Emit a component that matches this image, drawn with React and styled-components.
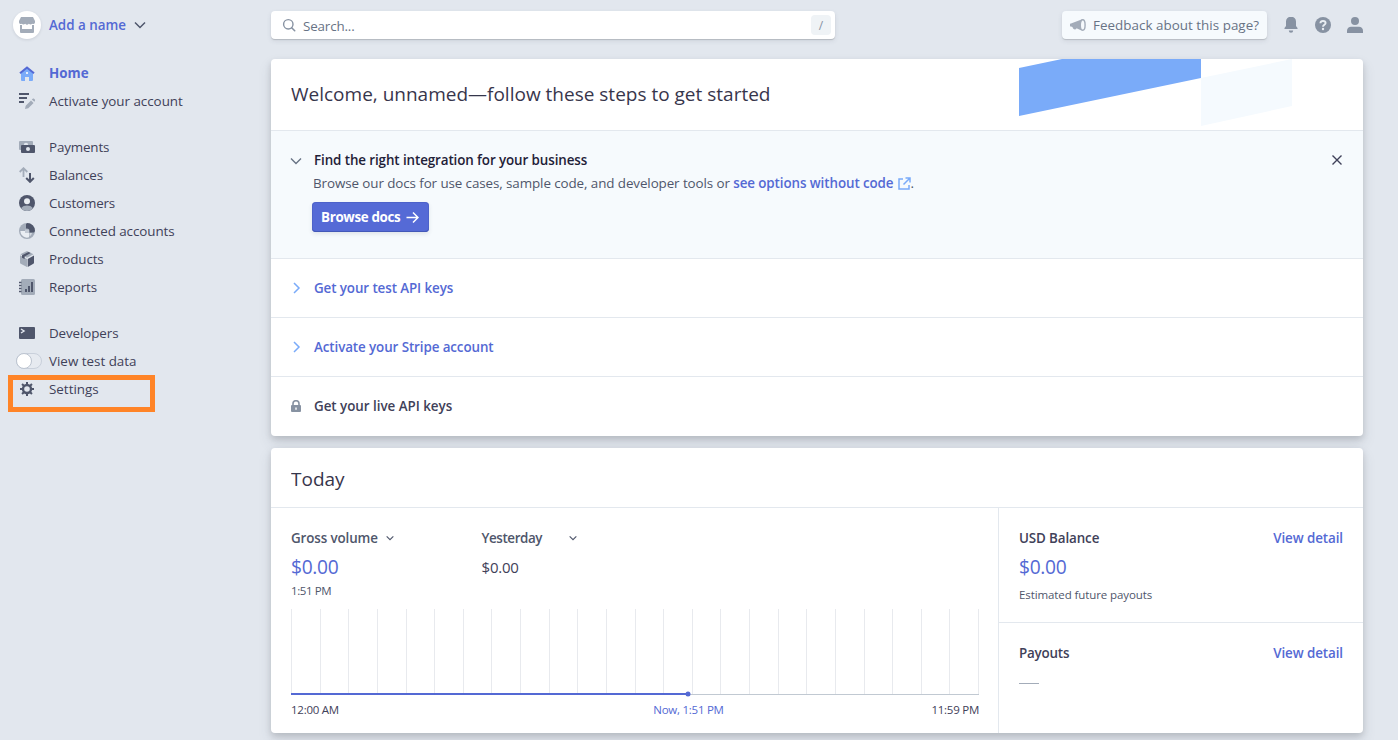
import React from "react";
import styled, { createGlobalStyle } from "styled-components";

const color = {
  page: "#e2e7ee",
  ink: "#1f2138",
  text: "#3f4159",
  slate: "#4f566b",
  muted: "#687385",
  icon: "#8792a2",
  pale: "#a3acb9",
  link: "#5469d4",
  sky: "#7aabf9",
  line: "#e3e8ee",
  tint: "#f6fafd",
};

const GlobalStyle = createGlobalStyle`
  *, *::before, *::after { box-sizing: border-box; }
  body {
    margin: 0;
    background: ${color.page};
    color: ${color.text};
    font-family: "Open Sans", "Noto Sans", sans-serif;
    font-size: 13.4px;
    overflow: hidden;
  }
  svg { display: block; flex: none; }
`;

const Page = styled.div`
  display: flex;
  width: 1398px;
  height: 740px;
  overflow: hidden;
`;

const Sidebar = styled.aside`
  width: 271px;
  flex: none;
  padding: 11px 0 0 13px;
`;

const Account = styled.div`
  display: flex;
  align-items: center;
  height: 28px;
  gap: 8px;
  color: ${color.link};
  font-weight: 600;
`;

const Avatar = styled.span`
  display: grid;
  place-items: center;
  width: 28px;
  height: 28px;
  border-radius: 50%;
  background: #fff;
  box-shadow: 0 1px 3px rgba(60, 66, 87, 0.14);
`;

const NavGroup = styled.nav`
  display: flex;
  flex-direction: column;
  margin-top: ${(p) => p.$top}px;
`;

const NavItem = styled.a`
  display: flex;
  align-items: center;
  height: 28px;
  gap: 8px;
  white-space: nowrap;
  color: ${(p) => (p.$active ? color.link : color.text)};
  font-weight: ${(p) => (p.$active ? 700 : 400)};
  letter-spacing: ${(p) => p.$spacing || 0}px;
`;

const NavIcon = styled.span`
  display: grid;
  place-items: center;
  width: 28px;
  height: 28px;
  flex: none;
`;

const Switch = styled.span`
  width: 26px;
  height: 16px;
  flex: none;
  margin: 0 -1px 0 3px;
  border: 1px solid #c9d0db;
  border-radius: 8px;
  background: #e6eaf0;
  &::before {
    content: "";
    display: block;
    width: 16px;
    height: 16px;
    margin: -1px 0 0 -1px;
    border: 1px solid #bcc4d0;
    border-radius: 50%;
    background: #fff;
  }
`;

const SettingsFrame = styled.div`
  width: 147px;
  height: 37px;
  margin: 0 0 0 -5px;
  border: 5px solid #ff8427;
  & > a { margin-top: -5px; }
`;

const Main = styled.main`
  width: 1092px;
  flex: none;
  padding-top: 11px;
`;

const Header = styled.header`
  display: flex;
  align-items: center;
  height: 28px;
  margin-bottom: 20px;
`;

const SearchBox = styled.div`
  display: flex;
  align-items: center;
  width: 564px;
  height: 28px;
  padding: 0 4px 0 11px;
  border-radius: 4px;
  background: #fff;
  color: ${color.muted};
  box-shadow: 0 1px 1px rgba(0, 0, 0, 0.16), 0 2px 5px rgba(60, 66, 87, 0.1);
  & > span:first-of-type { margin: 2px 0 0 7px; flex: 1; letter-spacing: -0.15px; }
`;

const KeyHint = styled.kbd`
  width: 20px;
  height: 20px;
  border-radius: 4px;
  background: #eff3f6;
  color: ${color.icon};
  font: 12px/21px "Open Sans", sans-serif;
  text-align: center;
`;

const FeedbackButton = styled.button`
  display: flex;
  align-items: center;
  gap: 7px;
  width: 205px;
  height: 28px;
  margin-left: auto;
  padding: 0 0 0 8px;
  border: 0;
  border-radius: 4px;
  background: ${color.tint};
  color: ${color.muted};
  font: inherit;
  letter-spacing: 0.03px;
  white-space: nowrap;
  box-shadow: 0 1px 1px rgba(0, 0, 0, 0.14), 0 2px 5px rgba(60, 66, 87, 0.1);
`;

const HeaderIcons = styled.div`
  display: flex;
  gap: 16px;
  margin: 0 0 0 16px;
`;

const Card = styled.section`
  border-radius: 4px;
  background: #fff;
  box-shadow: 0 7px 14px rgba(60, 66, 87, 0.13), 0 3px 6px rgba(0, 0, 0, 0.13);
  & + & { margin-top: 12px; }
`;

const CardHeader = styled.div`
  display: flex;
  justify-content: space-between;
  height: ${(p) => p.$height}px;
  padding: 0 71px 0 20px;
  border-bottom: 1px solid ${color.line};
`;

const Title = styled.h1`
  margin: 0;
  color: ${color.ink};
  font-size: 19px;
  font-weight: 400;
  line-height: ${(p) => p.$line}px;
  opacity: 0.9;
  white-space: nowrap;
`;

const OpenStep = styled.div`
  display: flex;
  height: 128px;
  padding: 19px 20px 0 19px;
  border-bottom: 1px solid ${color.line};
  background: ${color.tint};
  & > svg:first-child { margin-top: 5px; }
  & > svg:last-child { margin: 4px 0 0 auto; }
`;

const StepBody = styled.div`
  margin-left: 10px;
`;

const StepTitle = styled.div`
  height: 20px;
  margin-left: 2px;
  line-height: 20px;
  color: ${color.ink};
  font-weight: 600;
  letter-spacing: -0.1px;
`;

const StepText = styled.p`
  display: flex;
  align-items: center;
  height: 20px;
  margin: 3px 0 9px 1px;
  color: ${color.slate};
  white-space: pre;
  letter-spacing: -0.09px;
`;

const TextLink = styled.a`
  display: inline-flex;
  align-items: center;
  gap: 4px;
  color: ${color.link};
  font-weight: 600;
  letter-spacing: -0.09px;
`;

const DocsButton = styled.button`
  display: flex;
  align-items: center;
  gap: 6px;
  width: 117px;
  height: 30px;
  padding: 0 0 0 9px;
  border: 0;
  border-radius: 4px;
  background: #556ad6;
  color: #fff;
  font: 700 13.4px "Open Sans", sans-serif;
  letter-spacing: -0.35px;
  white-space: nowrap;
  box-shadow: inset 0 -1px 0 #4358b8, inset 0 0 0 1px rgba(70, 90, 190, 0.5), 0 2px 4px rgba(60, 66, 87, 0.12);
`;

const StepRow = styled.div`
  display: flex;
  align-items: center;
  gap: 12px;
  height: 59px;
  padding: 0 0 ${(p) => (p.$last ? 1 : 0)}px 19px;
  border-bottom: ${(p) => (p.$last ? 0 : 1)}px solid ${color.line};
  color: ${(p) => (p.$locked ? color.text : color.link)};
  font-weight: 600;
  letter-spacing: ${(p) => (p.$locked ? -0.03 : -0.1)}px;
`;

const Overview = styled.div`
  display: flex;
  height: 225px;
`;

const ChartPane = styled.div`
  width: 728px;
  padding: 20px 19px 0 20px;
  border-right: 1px solid ${color.line};
`;

const Metrics = styled.div`
  display: grid;
  grid-template-columns: 190.5px 1fr;
  height: 79px;
`;

const MetricName = styled.div`
  display: flex;
  align-items: center;
  gap: ${(p) => p.$gap}px;
  height: 20px;
  color: ${(p) => (p.$dark ? color.text : color.slate)};
  font-weight: 600;
  letter-spacing: ${(p) => p.$spacing || -0.12}px;
`;

const Amount = styled.div`
  height: 28px;
  margin-top: 5px;
  line-height: 28px;
  font-size: ${(p) => (p.$small ? 15 : 19.2)}px;
  letter-spacing: ${(p) => (p.$small ? -0.2 : -0.3)}px;
  color: ${(p) => (p.$small ? color.text : color.link)};
`;

const Caption = styled.div`
  height: 16px;
  margin-top: ${(p) => p.$top || 0}px;
  line-height: 16px;
  font-size: 11.5px;
  letter-spacing: ${(p) => p.$spacing || 0}px;
  color: ${color.slate};
`;

const ChartLabels = styled.div`
  display: grid;
  grid-template-columns: 1fr auto 1fr;
  margin-top: 5px;
  width: 688px;
  line-height: 16px;
  font-size: 11.5px;
  letter-spacing: -0.25px;
  & > :nth-child(2) { color: ${color.link}; padding-left: 107px; }
  & > :last-child { text-align: right; }
`;

const SidePane = styled.div`
  flex: 1;
`;

const Summary = styled.div`
  height: 114px;
  padding: 20px 20px 0;
  & + & { border-top: 1px solid ${color.line}; }
`;

const SummaryHead = styled.div`
  display: flex;
  align-items: center;
  justify-content: space-between;
  height: 20px;
`;

const EmptyValue = styled.div`
  width: 20px;
  height: 1px;
  margin-top: 20px;
  background: ${color.pale};
`;

const Icon = ({ size = 16, box = 16, children }) => (
  <svg width={size} height={size} viewBox={`0 0 ${box} ${box}`} fill="none">
    {children}
  </svg>
);

const Chevron = ({ dir = "down", size = 12, stroke = color.slate, width = 1.5 }) => (
  <Icon size={size} box={12}>
    <path
      d={dir === "down" ? "M1 3.5 6 8.5l5-5" : "M4 1l5 5-5 5"}
      stroke={stroke}
      strokeWidth={width}
    />
  </Icon>
);

const D = color.slate;
const P = color.pale;

const icons = {
  home: (
    <>
      <path d="M2 7.5 8 2l6 5.500V15a1 1 0 0 1-1 1h-3v-4H6v4H3a1 1 0 0 1-1-1z" fill={color.sky} />
      <path d="M1 8.2 8 2.500l7 5.700" stroke={color.link} strokeWidth="2" />
      <path d="M7 7h2v2H7z" fill="#e3edfd" />
    </>
  ),
  activate: (
    <>
      <path d="M0 1h10M0 5h8M0 9h5" stroke={D} strokeWidth="2" />
      <path d="m6 16 .7-3.300L12 7.400l2.600 2.600-5.300 5.300zM12.800 6.600l.9-.9c.4-.4.9-.4 1.300 0l.9.9c.4.4.4.9 0 1.300l-.6.9z" fill={P} />
    </>
  ),
  payments: (
    <>
      <rect x="0" y="2" width="14" height="9" rx="1" fill={P} />
      <circle cx="7" cy="6" r="2.200" fill="#e2e7ee" />
      <rect x="2" y="6" width="14" height="8" rx="1" fill={D} />
      <circle cx="9" cy="10" r="2" fill="#e2e7ee" />
    </>
  ),
  balances: (
    <>
      <path d="M4.500 10V1.500M.7 5l3.800-3.800L8.300 5" stroke={P} strokeWidth="1.800" />
      <path d="M11 6v8.500M7.200 11l3.800 3.800 3.800-3.800" stroke={D} strokeWidth="2" />
    </>
  ),
  customers: (
    <>
      <circle cx="8" cy="8" r="8" fill={D} />
      <circle cx="8" cy="6.200" r="3" fill="#e9edf2" />
      <path d="M2 13.300C3.500 11.200 5.700 10.500 8 10.500s4.500.7 6 2.800A8 8 0 0 1 2 13.300z" fill={P} />
    </>
  ),
  connected: (
    <>
      <circle cx="8" cy="8" r="8" fill={P} />
      <path d="M1.300 8H6v2h4v4.300A6.700 6.700 0 0 1 1.300 8z" fill="#eaeef3" />
      <path d="M6 6.500h4V10H6z" fill="#c3cad4" />
      <path d="M7 1.200 8 0a8 8 0 0 1 8 8l-1 1.500h-4.500V8A2.500 2.500 0 0 0 8 5.500H7z" fill={D} />
      <path d="M10.500 10H13a5 5 0 0 1-2.500 3.500z" fill="#d3d9e1" />
    </>
  ),
  products: (
    <>
      <path d="M1 4.200 8 8v8l-6.300-3.300A1.200 1.200 0 0 1 1 11.600z" fill={P} />
      <path d="M8.700 8 15 4.500v7.200c0 .4-.2.8-.6 1L8.700 16z" fill={D} />
      <path d="M1.300 3.200 7.500.2a1.200 1.200 0 0 1 1 0l6 3L8 6.700z" fill={P} />
      <path d="M3 4.300 9.500 1l2.200 1.100L5.600 5.500v2.600L3 6.800z" fill={D} />
    </>
  ),
  reports: (
    <>
      <rect x="2" y="0" width="14" height="16" rx="1.500" fill={P} />
      <path d="M0 3.500h2.500M0 6.500h2.500M0 9.500h2.500M0 12.500h2.500" stroke={D} strokeWidth="1.500" />
      <path d="M7 13V10M10 13V7M13 13V3" stroke={D} strokeWidth="2" />
    </>
  ),
  developers: (
    <>
      <rect x="0" y="2" width="16" height="12" rx="1" fill={D} />
      <path d="m2 4 3 2-3 2" stroke="#e2e7ee" strokeWidth="1.500" />
    </>
  ),
  settings: (
    <g stroke={D}>
      <circle cx="8" cy="8" r="4" strokeWidth="2.400" />
      <path
        d="M8 1v3M8 12v3M1 8h3M12 8h3M3.050 3.050l2 2M10.950 10.950l2 2M3.050 12.950l2-2M10.950 5.050l2-2"
        strokeWidth="2"
      />
    </g>
  ),
};

const menu = [
  { icon: "payments", label: "Payments", spacing: -0.15 },
  { icon: "balances", label: "Balances", spacing: -0.2 },
  { icon: "customers", label: "Customers", spacing: -0.18 },
  { icon: "connected", label: "Connected accounts", spacing: -0.06 },
  { icon: "products", label: "Products", spacing: -0.12 },
  { icon: "reports", label: "Reports", spacing: -0.1 },
];

const MenuLink = ({ icon, label, active, spacing }) => (
  <NavItem $active={active} $spacing={spacing}>
    <NavIcon>
      <Icon>{icons[icon]}</Icon>
    </NavIcon>
    {label}
  </NavItem>
);

const VolumeChart = () => (
  <svg width="688" height="90" viewBox="0 0 688 90" shapeRendering="crispEdges">
    {Array.from({ length: 25 }, (_, i) => (
      <rect key={i} x={Math.round((i * 687) / 24)} y="2" width="1" height="85" fill="#e8eaee" />
    ))}
    <rect x="0" y="87" width="688" height="1" fill="#c1c9d2" />
    <rect x="0" y="86" width="397" height="2" fill={color.link} />
    <circle cx="397" cy="87" r="2.500" fill={color.link} shapeRendering="auto" />
  </svg>
);

export default function App() {
  return (
    <Page>
      <GlobalStyle />
      <Sidebar>
        <Account>
          <Avatar>
            <Icon>
              <path d="M2 0h12l2 4v1.500a2 2 0 0 1-2.700 1.300 2.600 2.600 0 0 1-3.500 0 2.600 2.600 0 0 1-3.600 0 2.600 2.600 0 0 1-3.500 0A2 2 0 0 1 0 5.500V4z" fill={P} />
              <path d="M1 8h2v4h10V8h2v7a1 1 0 0 1-1 1H2a1 1 0 0 1-1-1z" fill={P} />
            </Icon>
          </Avatar>
          Add a name
          <Chevron />
        </Account>
        <NavGroup $top={20}>
          <MenuLink icon="home" label="Home" active />
          <MenuLink icon="activate" label="Activate your account" spacing={-0.03} />
        </NavGroup>
        <NavGroup $top={18}>
          {menu.map((m) => (
            <MenuLink key={m.icon} {...m} />
          ))}
        </NavGroup>
        <NavGroup $top={18}>
          <MenuLink icon="developers" label="Developers" spacing={-0.1} />
          <NavItem>
            <Switch />
            View test data
          </NavItem>
          <SettingsFrame>
            <MenuLink icon="settings" label="Settings" />
          </SettingsFrame>
        </NavGroup>
      </Sidebar>

      <Main>
        <Header>
          <SearchBox>
            <Icon size={14} box={14}>
              <circle cx="6.300" cy="6.300" r="4.700" stroke={color.icon} strokeWidth="1.400" />
              <path d="m9.700 9.700 3 3" stroke={color.icon} strokeWidth="1.600" strokeLinecap="round" />
            </Icon>
            <span>Search...</span>
            <KeyHint>/</KeyHint>
          </SearchBox>
          <FeedbackButton>
            <Icon>
              <path d="M11.500 2.500 1 6.500a1.500 1.500 0 0 0 0 3l1.500.5c.3 2 1.500 2.700 3.500 2.300l.5-1 5 2.200z" fill={P} />
              <ellipse cx="12.700" cy="8" rx="2.400" ry="5.200" fill={color.tint} stroke={P} strokeWidth="1.400" />
            </Icon>
            Feedback about this page?
          </FeedbackButton>
          <HeaderIcons>
            <Icon>
              <path d="M8-1a5 5 0 0 0-5 5v4.500L1.500 10.500V11.500h13V10.500L13 8.500V4a5 5 0 0 0-5-5zM5.800 13h4.400a2.200 2.200 0 0 1-4.400 0z" fill={color.icon} transform="translate(0 .6)" />
            </Icon>
            <Icon>
              <circle cx="8" cy="8" r="8" fill={color.icon} />
              <path d="M5.400 6.200C5.500 4.700 6.500 4 8 4s2.600.8 2.600 2.100C10.600 7.800 8 7.800 8 9.800" stroke="#e9edf2" strokeWidth="1.900" />
              <circle cx="8" cy="12" r="1.200" fill="#e9edf2" />
            </Icon>
            <Icon>
              <circle cx="8" cy="4" r="4" fill={color.icon} />
              <path d="M0 16v-2.500C0 11 2 9.700 4 9.700h8c2 0 4 1.300 4 3.800V16z" fill={color.icon} />
            </Icon>
          </HeaderIcons>
        </Header>

        <Card>
          <CardHeader $height={72}>
            <Title $line={70}>Welcome, unnamed—follow these steps to get started</Title>
            <svg width="273" height="67" viewBox="0 0 273 67">
              <path d="M0 9 43 0h139v19L0 57z" fill={color.sky} />
              <path d="M182 19 273 0v47l-91 20z" fill="#f5fafe" />
            </svg>
          </CardHeader>
          <OpenStep>
            <Chevron stroke={color.muted} width={1.400} />
            <StepBody>
              <StepTitle>Find the right integration for your business</StepTitle>
              <StepText>
                Browse our docs for use cases, sample code, and developer tools or{" "}
                <TextLink>
                  see options without code
                  <Icon size={13} box={13}>
                    <path d="M5 2H1v10h10V8M7.500 1H12v4.500M12 1 5.500 7.500" stroke={color.sky} strokeWidth="1.500" />
                  </Icon>
                </TextLink>
                .
              </StepText>
              <DocsButton>
                Browse docs
                <Icon size={13} box={13}>
                  <path d="M.5 6.500H12M7 1.500l5 5-5 5" stroke="#fff" strokeWidth="1.500" />
                </Icon>
              </DocsButton>
            </StepBody>
            <Icon size={12} box={12}>
              <path d="m1.500 1.500 9 9M10.500 1.500l-9 9" stroke={color.text} strokeWidth="1.400" />
            </Icon>
          </OpenStep>
          <StepRow>
            <Chevron dir="right" stroke={color.sky} />
            <span>Get your test API keys</span>
          </StepRow>
          <StepRow>
            <Chevron dir="right" stroke={color.sky} />
            <span>Activate your Stripe account</span>
          </StepRow>
          <StepRow $last $locked>
            <Icon size={12} box={12}>
              <rect x="1" y="5" width="10" height="7" rx="1" fill={color.icon} />
              <path d="M3 5.500V3.700a3 3 0 0 1 6 0v1.800" stroke={color.icon} strokeWidth="1.600" />
              <path d="M5.300 7.500h1.400v2.200H5.300z" fill="#fff" />
            </Icon>
            <span>Get your live API keys</span>
          </StepRow>
        </Card>

        <Card>
          <CardHeader $height={60}>
            <Title $line={62}>Today</Title>
          </CardHeader>
          <Overview>
            <ChartPane>
              <Metrics>
                <div>
                  <MetricName $gap={8}>
                    Gross volume
                    <Chevron size={8} width={1.700} />
                  </MetricName>
                  <Amount>$0.00</Amount>
                  <Caption $top={2} $spacing={-0.400}>1:51 PM</Caption>
                </div>
                <div>
                  <MetricName $gap={27} $spacing={-0.400}>
                    Yesterday
                    <Chevron size={8} width={1.700} />
                  </MetricName>
                  <Amount $small>$0.00</Amount>
                </div>
              </Metrics>
              <VolumeChart />
              <ChartLabels>
                <span>12:00 AM</span>
                <span>Now, 1:51 PM</span>
                <span>11:59 PM</span>
              </ChartLabels>
            </ChartPane>
            <SidePane>
              <Summary>
                <SummaryHead>
                  <MetricName $dark>USD Balance</MetricName>
                  <TextLink>View detail</TextLink>
                </SummaryHead>
                <Amount>$0.00</Amount>
                <Caption $top={6} $spacing={-0.1}>Estimated future payouts</Caption>
              </Summary>
              <Summary>
                <SummaryHead>
                  <MetricName $dark $spacing={-0.2}>Payouts</MetricName>
                  <TextLink>View detail</TextLink>
                </SummaryHead>
                <EmptyValue />
              </Summary>
            </SidePane>
          </Overview>
        </Card>
      </Main>
    </Page>
  );
}
